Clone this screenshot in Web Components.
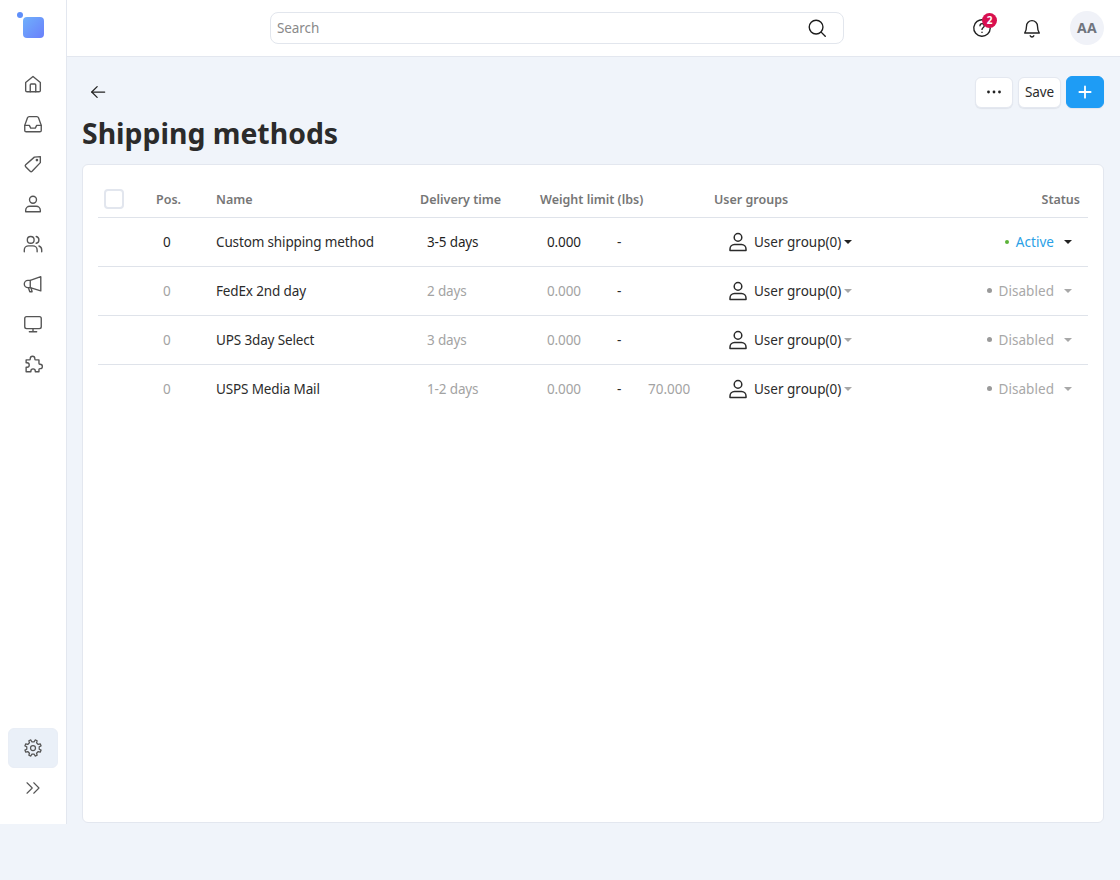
<!DOCTYPE html>
<html lang="en">
<head>
<meta charset="utf-8">
<title>Shipping methods</title>
<style>
  html, body { margin: 0; padding: 0; background: #f0f4fa; }
  body { font-family: "Noto Sans", "Open Sans", sans-serif; color: #2b2b2b; }
</style>
</head>
<body>
<app-shell>
  <side-nav slot="side"></side-nav>
  <top-bar slot="top"></top-bar>
  <page-head slot="main" heading="Shipping methods"></page-head>
  <methods-table slot="main">
    <method-row pos="0" name="Custom shipping method" time="3-5 days" weight="0.000" status="Active"></method-row>
    <method-row pos="0" name="FedEx 2nd day" time="2 days" weight="0.000" status="Disabled"></method-row>
    <method-row pos="0" name="UPS 3day Select" time="3 days" weight="0.000" status="Disabled"></method-row>
    <method-row pos="0" name="USPS Media Mail" time="1-2 days" weight="0.000" max="70.000" status="Disabled" last></method-row>
  </methods-table>
</app-shell>

<script>
// 8 tooth outline, so the cog stays centred in its box
function gearPath() {
  let d = "";
  for (let i = 0; i < 8; i++) {
    const a = i * Math.PI / 4 - Math.PI / 8;
    [[-.2, 7.6], [-.13, 10], [.13, 10], [.2, 7.6]].forEach(([o, r], j) => {
      const x = 12 + r * Math.cos(a + o), y = 12 + r * Math.sin(a + o);
      d += (i === 0 && j === 0 ? "M" : "L") + x.toFixed(2) + " " + y.toFixed(2);
    });
  }
  return d + "z";
}

const ICONS = {
  home: '<path d="M4 10.3 12 3.800l8 6.500V19a1.500 1.500 0 0 1-1.500 1.500h-13A1.500 1.500 0 0 1 4 19z"/><path d="M9 20.500V13a1 1 0 0 1 1-1h4a1 1 0 0 1 1 1v7.500"/>',
  inbox: '<path d="M3 13.500V19a1.500 1.500 0 0 0 1.500 1.500h15A1.500 1.500 0 0 0 21 19v-5.500L18 5.200A2 2 0 0 0 16.200 4H7.800A2 2 0 0 0 6 5.200z"/><path d="M3 13.500h5l1.500 3h5l1.500-3h5"/>',
  tag: '<path d="M13.500 4.500 20 4v6.500l-9 9.500a1.500 1.500 0 0 1-2.100 0L4 15a1.500 1.500 0 0 1 0-2.100z"/><circle cx="16.300" cy="7.700" r=".7"/>',
  user: '<circle cx="12" cy="7.400" r="3.800"/><path d="M4 20.500V19c0-2.500 2-4.500 4.500-4.500h7c2.500 0 4.500 2 4.500 4.500v1.500z"/>',
  users: '<circle cx="9.500" cy="7.500" r="3.700"/><path d="M2.500 20.500v-2c0-2.500 2.200-4.500 4.700-4.500h4.600c2.500 0 4.700 2 4.700 4.500v2"/><path d="M15.500 3.800a3.800 3.800 0 0 1 0 7.400"/><path d="M18.500 14.200c1.800.6 3 2.200 3 4.300v2"/>',
  horn: '<path d="M20.500 4v15.500L9 16H6.500a4 4 0 0 1 0-8H9z"/><path d="M9 8v8"/><path d="M7 16l1.500 4.500h2.500L10 16.500"/>',
  monitor: '<rect x="3" y="4" width="18" height="13" rx="2"/><path d="M12 17v3.500M8 20.500h8"/>',
  puzzle: '<path d="M9 6.500V6a2.500 2.500 0 0 1 5 0v.5c0 .6.400 1 1 1h3.500v3.800c0 .6.400 1 1 1h.3a2.400 2.400 0 0 1 0 4.800h-.3c-.6 0-1 .4-1 1V20.500h-4v-.8a2.400 2.400 0 0 0-4.800 0v.8H4.500v-5h1a2.400 2.400 0 0 0 0-4.800h-1V7.500H8c.6 0 1-.4 1-1z"/>',
  gear: `<circle cx="12" cy="12" r="3"/><path d="${gearPath()}"/>`,
  chevrons: '<path d="M4 5l7 7-7 7"/><path d="M13 5l7 7-7 7"/>',
  search: '<circle cx="11" cy="11" r="7.500"/><path d="M16.500 16.500 21 21"/>',
  help: '<path d="M13.500 3.100A9 9 0 1 0 21 12"/><path d="M9.800 9.500a2.300 2.300 0 1 1 3.600 1.900c-.9.6-1.400 1.100-1.400 2.100"/><path d="M12 16.500v.3"/>',
  bell: '<path d="M6 10a6 6 0 0 1 12 0c0 4 .8 5.700 2 7.500H4C5.200 15.700 6 14 6 10z"/><path d="M10 20.500a2.200 2.200 0 0 0 4 0"/>',
  back: '<path d="M20 12H4.500"/><path d="M11 5.500 4.500 12l6.500 6.500"/>',
  plus: '<path d="M12 4.500v15M4.500 12h15"/>'
};

function icon(name, size, width) {
  return `<svg width="${size}" height="${size}" viewBox="0 0 24 24" fill="none" stroke="currentColor" stroke-width="${width || 1.5}" stroke-linecap="round" stroke-linejoin="round">${ICONS[name]}</svg>`;
}

class AppShell extends HTMLElement {
  constructor() {
    super();
    this.attachShadow({ mode: "open" });
    this.shadowRoot.innerHTML = `
      <style>
        :host {
          display: grid;
          grid-template-columns: 67px 1fr;
          grid-template-rows: 57px 767px;
          height: 824px;
        }
        .side { grid-row: 1 / 3; display: flex; }
        .main {
          display: flex;
          flex-direction: column;
          padding: 19px 16px 0 15px;
          min-height: 0;
        }
      </style>
      <div class="side"><slot name="side"></slot></div>
      <slot name="top"></slot>
      <div class="main"><slot name="main"></slot></div>
    `;
  }
}

class SideNav extends HTMLElement {
  constructor() {
    super();
    this.attachShadow({ mode: "open" });
    const top = ["home", "inbox", "tag", "user", "users", "horn", "monitor", "puzzle"];
    this.shadowRoot.innerHTML = `
      <style>
        :host {
          display: flex;
          flex-direction: column;
          align-items: center;
          width: 66px;
          background: #fff;
          border-right: 1px solid #e3e7ef;
          color: #555;
        }
        .logo { position: relative; width: 21px; height: 21px; margin: 17px 0 0 1px; border-radius: 4px;
          background: linear-gradient(135deg, #6fb0fb, #6a7ffb); }
        .logo::before { content: ""; position: absolute; left: -6px; top: -5px; width: 6px; height: 6px;
          border-radius: 50%; background: #5f8ffa; }
        .items { display: flex; flex-direction: column; gap: 18px; margin-top: 35px; }
        .item { display: flex; width: 22px; height: 22px; }
        .spacer { flex: 1; }
        .settings { display: flex; align-items: center; justify-content: center; width: 48px; height: 38px;
          border: 1px solid #e9eef6; border-radius: 6px; background: #eaf0f8; }
        .collapse { display: flex; margin: 11px 0 27px; }
      </style>
      <div class="logo"></div>
      <div class="items">${top.map(n => `<span class="item">${icon(n, 22)}</span>`).join("")}</div>
      <div class="spacer"></div>
      <div class="settings">${icon("gear", 20)}</div>
      <div class="collapse">${icon("chevrons", 18)}</div>
    `;
  }
}

class TopBar extends HTMLElement {
  constructor() {
    super();
    this.attachShadow({ mode: "open" });
    this.shadowRoot.innerHTML = `
      <style>
        :host {
          display: flex;
          align-items: center;
          background: #fff;
          border-bottom: 1px solid #e3e7ef;
          padding: 0 16px 0 203px;
          box-sizing: border-box;
          height: 57px;
        }
        .search { display: flex; align-items: center; justify-content: space-between; width: 574px; height: 32px;
          box-sizing: border-box; border: 1px solid #e2e6ed; border-radius: 8px; padding: 0 15px 0 6px; margin-top: -1px;
          font-size: 13.5px; letter-spacing: -.1px; color: #8a8a8a; }
        .search svg { color: #1c1c1c; }
        .right { display: flex; align-items: center; margin-left: auto; color: #222; }
        .help { position: relative; display: flex; margin-right: 28px; }
        .badge { position: absolute; left: 11px; top: -4px; width: 15px; height: 15px; border-radius: 50%;
          background: #d8104f; color: #fff; font-size: 10px; font-weight: 700; line-height: 15px; text-align: center; }
        .bell { display: flex; margin-right: 27px; }
        .avatar { width: 34px; height: 34px; border-radius: 50%; background: #f0f2f8; color: #70757f;
          font-size: 14px; font-weight: 700; letter-spacing: .3px; line-height: 34px; text-align: center; }
      </style>
      <div class="search"><span>Search</span>${icon("search", 22)}</div>
      <div class="right">
        <span class="help">${icon("help", 22)}<span class="badge">2</span></span>
        <span class="bell">${icon("bell", 22)}</span>
        <span class="avatar">AA</span>
      </div>
    `;
  }
}

class PageHead extends HTMLElement {
  constructor() {
    super();
    this.attachShadow({ mode: "open" });
    this.shadowRoot.innerHTML = `
      <style>
        :host { display: block; height: 88px; flex: none; }
        .bar { display: flex; align-items: center; height: 32px; padding-left: 6px; color: #222; }
        .back { display: flex; margin-top: 0; }
        .actions { display: flex; margin-left: auto; align-items: center; }
        button { font: inherit; font-size: 13.5px; letter-spacing: -.1px; color: #2b2b2b; background: #fff; border: 1px solid #e4e8f0; border-radius: 6px;
          height: 31px; padding: 0; display: flex; align-items: center; justify-content: center;
          box-shadow: 0 1px 1px rgba(40,50,80,.08); }
        .more { width: 38px; margin-right: 5px; }
        .save { width: 43px; margin-right: 5px; }
        .add { width: 38px; height: 32px; background: #1e9cf5; border-color: #1e9cf5; color: #fff; }
        h1 { margin: 5px 0 0; font-size: 28.4px; line-height: 40px; font-weight: 700; color: #2b2b2b; }
      </style>
      <div class="bar">
        <span class="back">${icon("back", 20)}</span>
        <div class="actions">
          <button class="more"><svg width="16" height="4" viewBox="0 0 16 4" fill="#222"><circle cx="2.500" cy="2" r="1.400"/><circle cx="8" cy="2" r="1.400"/><circle cx="13.500" cy="2" r="1.400"/></svg></button>
          <button class="save">Save</button>
          <button class="add">${icon("plus", 18, 2.4)}</button>
        </div>
      </div>
      <h1>${this.getAttribute("heading")}</h1>
    `;
  }
}

const COLUMNS = "58px 60px 204px 120px 174px 1fr 164px";

class MethodsTable extends HTMLElement {
  constructor() {
    super();
    this.attachShadow({ mode: "open" });
    this.shadowRoot.innerHTML = `
      <style>
        :host {
          display: block;
          flex: 1;
          background: #fff;
          border: 1px solid #e3e7ef;
          border-radius: 6px;
          padding: 16px 15px 0;
          margin-bottom: 1px;
          --columns: ${COLUMNS};
        }
        .head { display: grid; grid-template-columns: var(--columns); align-items: center; height: 36px;
          border-bottom: 1px solid #dfe3ea; font-size: 12.5px; font-weight: 600; color: #767676; }
        .check { width: 20px; height: 20px; box-sizing: border-box; margin: 0 0 0 6px; border: 2px solid #e2e6ee; border-radius: 4px; }
        .status { text-align: right; padding-right: 8px; }
      </style>
      <div class="head">
        <span class="check"></span>
        <span>Pos.</span>
        <span>Name</span>
        <span>Delivery time</span>
        <span>Weight limit (lbs)</span>
        <span>User groups</span>
        <span class="status">Status</span>
      </div>
      <slot></slot>
    `;
  }
}

class MethodRow extends HTMLElement {
  constructor() {
    super();
    this.attachShadow({ mode: "open" });
  }

  connectedCallback() {
    const attr = n => this.getAttribute(n) || "";
    const active = attr("status") === "Active";
    this.shadowRoot.innerHTML = `
      <style>
        :host {
          display: grid;
          grid-template-columns: var(--columns);
          align-items: center;
          box-sizing: border-box;
          height: 49px;
          padding-bottom: 1px;
          border-bottom: 1px solid #dfe3ea;
          font-size: 13.5px;
          letter-spacing: -.14px;
          color: ${active ? "#1f1f1f" : "#a3a3a3"};
          --caret: ${active ? "#222" : "#a8a8a8"};
        }
        :host([last]) { border-bottom-color: transparent; }
        .pos, .time { padding-left: 7px; }
        .name { color: #2b2b2b; }
        .weight { display: flex; padding-left: 7px; }
        .weight .min { width: 70px; }
        .weight .dash { color: #2b2b2b; width: 31px; }
        .weight .max { letter-spacing: 0; }
        .group { display: flex; align-items: center; padding-left: 12px; color: #2b2b2b; letter-spacing: 0; }
        .group svg { margin-right: 4px; }
        .caret { display: inline-block; width: 0; height: 0; border: 4px solid transparent; border-top-color: var(--caret);
          border-bottom-width: 0; margin-left: 3px; }
        .status { display: flex; align-items: center; justify-content: flex-end; padding-right: 16px; letter-spacing: .05px; }
        .dot { width: ${active ? 4 : 5}px; height: ${active ? 4 : 5}px; border-radius: 50%; margin-right: 7px; background: ${active ? "#5cb338" : "#9a9a9a"}; }
        .state { color: ${active ? "#2a9fe6" : "#a8a8a8"}; margin-right: 10px; }
        .status .caret { margin-left: 0; }
      </style>
      <span></span>
      <span class="pos">${attr("pos")}</span>
      <span class="name">${attr("name")}</span>
      <span class="time">${attr("time")}</span>
      <span class="weight"><span class="min">${attr("weight")}</span><span class="dash">-</span><span class="max">${attr("max")}</span></span>
      <span class="group">${icon("user", 24)}<span>User group(0)</span><i class="caret"></i></span>
      <span class="status"><i class="dot"></i><span class="state">${attr("status")}</span><i class="caret"></i></span>
    `;
  }
}

customElements.define("app-shell", AppShell);
customElements.define("side-nav", SideNav);
customElements.define("top-bar", TopBar);
customElements.define("page-head", PageHead);
customElements.define("methods-table", MethodsTable);
customElements.define("method-row", MethodRow);
</script>
</body>
</html>
